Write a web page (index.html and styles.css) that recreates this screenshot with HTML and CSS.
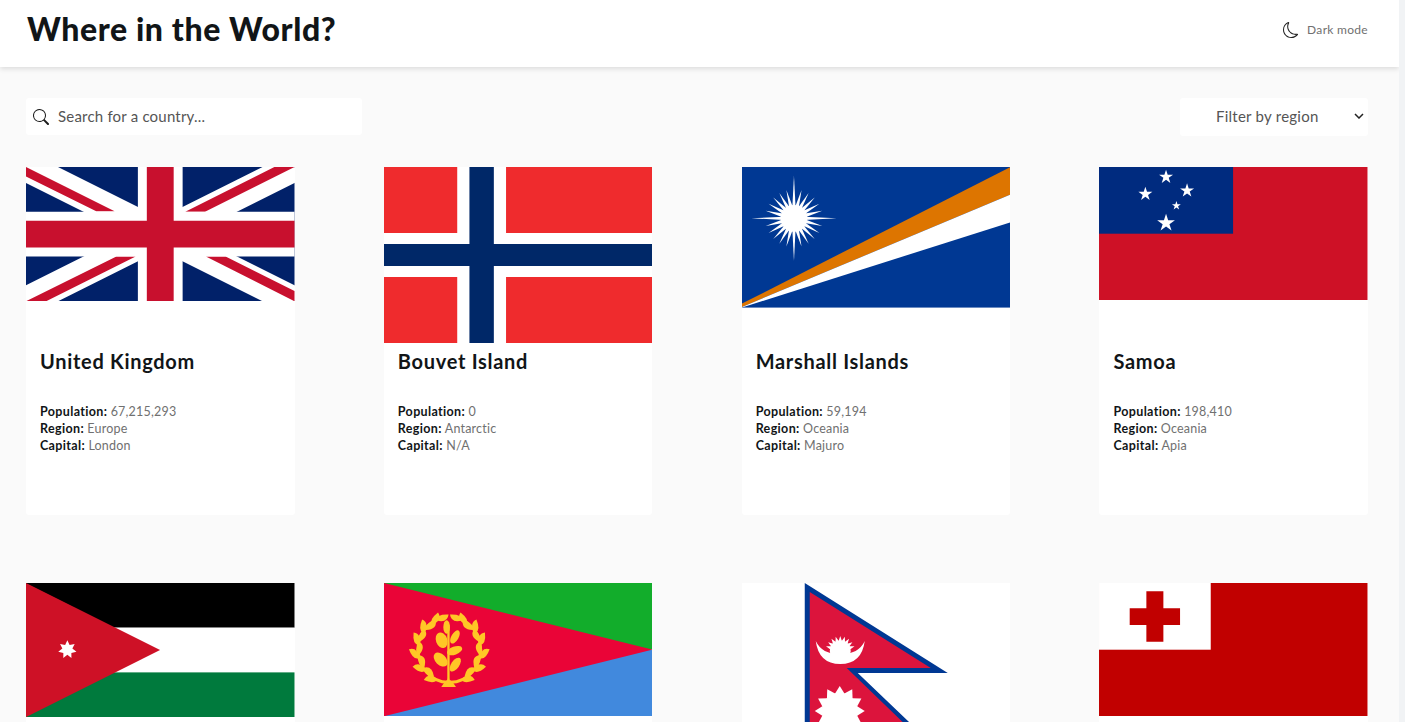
FILE: index.html
```html
<!DOCTYPE html>
<html lang="en">
<head>
<meta charset="utf-8">
<title>Where in the World?</title>
<link rel="stylesheet" href="styles.css">
</head>
<body>
<div class="app">
  <header class="topbar">
    <h1 class="brand">Where in the World?</h1>
    <button class="mode" type="button">
      <svg class="mode-icon" viewBox="0 0 16 16" fill="currentColor"><path d="M6 .278a.768.768 0 0 1 .08.858 7.208 7.208 0 0 0-.878 3.46c0 4.021 3.278 7.277 7.318 7.277.527 0 1.04-.055 1.533-.16a.787.787 0 0 1 .81.316.733.733 0 0 1-.031.893A8.349 8.349 0 0 1 8.344 16C3.734 16 0 12.286 0 7.71 0 4.266 2.114 1.312 5.124.06A.752.752 0 0 1 6 .278zM4.858 1.311A7.269 7.269 0 0 0 1.025 7.71c0 4.02 3.279 7.276 7.319 7.276a7.316 7.316 0 0 0 5.205-2.162c-.337.042-.68.063-1.029.063-4.61 0-8.343-3.714-8.343-8.29 0-1.167.242-2.278.681-3.286z"/></svg>
      <span>Dark mode</span>
    </button>
  </header>
  <main class="content">
    <div class="toolbar">
      <label class="search">
        <svg class="search-icon" viewBox="0 0 16 16" fill="currentColor"><path d="M11.742 10.344a6.5 6.5 0 1 0-1.397 1.398h-.001c.03.04.062.078.098.115l3.85 3.85a1 1 0 0 0 1.415-1.414l-3.85-3.85a1.007 1.007 0 0 0-.115-.1zM12 6.5a5.5 5.5 0 1 1-11 0 5.5 5.5 0 0 1 11 0z"/></svg>
        <input class="search-input" type="text" placeholder="Search for a country...">
      </label>
      <div class="filter">
        <span>Filter by region</span>
        <svg class="chevron" viewBox="0 0 10 6" fill="none" stroke="currentColor" stroke-width="1.5"><path d="M1 1l4 4 4-4"/></svg>
      </div>
    </div>

    <svg class="defs" aria-hidden="true">
      <defs>
        <polygon id="star5" points="0,-1 .225,-.309 .951,-.309 .363,.118 .588,.809 0,.382 -.588,.809 -.363,.118 -.951,-.309 -.225,-.309"/>
        <polygon id="ray-long" points="-5,-30 0,-128 5,-30"/>
        <polygon id="ray-short" points="-6,-30 0,-88 6,-30"/>
        <path id="leaf" d="M0 0Q6 -18 40 -7Q30 18 0 0Z"/>
      </defs>
    </svg>

    <section class="grid">
      <article class="card">
        <div class="flagbox">
          <svg class="flag" viewBox="0 0 60 30">
            <rect width="60" height="30" fill="#012169"/>
            <path d="M0 0L60 30M60 0L0 30" stroke="#fff" stroke-width="6.4"/>
            <path d="M0 0L19.8 9.9H15.7L0 2.1ZM55.5 0H60L40 10H35.6ZM20.2 20H24.5L4.5 30H0ZM40.2 20H44.6L60 27.7V30Z" fill="#C8102E"/>
            <path d="M30 0V30M0 15H60" stroke="#fff" stroke-width="10"/>
            <path d="M30 0V30M0 15H60" stroke="#C8102E" stroke-width="6"/>
          </svg>
        </div>
        <div class="card-body">
          <h2 class="country">United Kingdom</h2>
          <p class="fact"><b>Population:</b> 67,215,293</p>
          <p class="fact"><b>Region:</b> Europe</p>
          <p class="fact"><b>Capital:</b> London</p>
        </div>
      </article>

      <article class="card">
        <div class="flagbox">
          <svg class="flag flag-fill" viewBox="0 0 22 16" preserveAspectRatio="none">
            <rect width="22" height="16" fill="#EF2B2D"/>
            <path d="M8 0V16M0 8H22" stroke="#fff" stroke-width="4"/>
            <path d="M8 0V16M0 8H22" stroke="#002868" stroke-width="2"/>
          </svg>
        </div>
        <div class="card-body">
          <h2 class="country">Bouvet Island</h2>
          <p class="fact"><b>Population:</b> 0</p>
          <p class="fact"><b>Region:</b> Antarctic</p>
          <p class="fact"><b>Capital:</b> N/A</p>
        </div>
      </article>

      <article class="card">
        <div class="flagbox">
          <svg class="flag" viewBox="0 0 806 422">
            <rect width="806" height="422" fill="#003893"/>
            <polygon points="0,410 806,0 806,83 0,420" fill="#DD7500"/>
            <polygon points="0,420 806,83 806,166 0,422" fill="#fff"/>
            <g fill="#fff" transform="translate(156 154)">
              <circle r="40"/>
              <use href="#ray-long"/>
              <use href="#ray-short" transform="rotate(15)"/>
              <use href="#ray-short" transform="rotate(30)"/>
              <use href="#ray-short" transform="rotate(45)"/>
              <use href="#ray-short" transform="rotate(60)"/>
              <use href="#ray-short" transform="rotate(75)"/>
              <use href="#ray-long" transform="rotate(90)"/>
              <use href="#ray-short" transform="rotate(105)"/>
              <use href="#ray-short" transform="rotate(120)"/>
              <use href="#ray-short" transform="rotate(135)"/>
              <use href="#ray-short" transform="rotate(150)"/>
              <use href="#ray-short" transform="rotate(165)"/>
              <use href="#ray-long" transform="rotate(180)"/>
              <use href="#ray-short" transform="rotate(195)"/>
              <use href="#ray-short" transform="rotate(210)"/>
              <use href="#ray-short" transform="rotate(225)"/>
              <use href="#ray-short" transform="rotate(240)"/>
              <use href="#ray-short" transform="rotate(255)"/>
              <use href="#ray-long" transform="rotate(270)"/>
              <use href="#ray-short" transform="rotate(285)"/>
              <use href="#ray-short" transform="rotate(300)"/>
              <use href="#ray-short" transform="rotate(315)"/>
              <use href="#ray-short" transform="rotate(330)"/>
              <use href="#ray-short" transform="rotate(345)"/>
            </g>
          </svg>
        </div>
        <div class="card-body">
          <h2 class="country">Marshall Islands</h2>
          <p class="fact"><b>Population:</b> 59,194</p>
          <p class="fact"><b>Region:</b> Oceania</p>
          <p class="fact"><b>Capital:</b> Majuro</p>
        </div>
      </article>

      <article class="card">
        <div class="flagbox">
          <svg class="flag" viewBox="0 0 805 400">
            <rect width="805" height="400" fill="#CE1126"/>
            <rect width="402" height="200" fill="#002B7F"/>
            <g fill="#fff">
              <use href="#star5" transform="translate(201 30) scale(22)"/>
              <use href="#star5" transform="translate(139 81) scale(22)"/>
              <use href="#star5" transform="translate(264 71) scale(22)"/>
              <use href="#star5" transform="translate(232 116) scale(14)"/>
              <use href="#star5" transform="translate(201 168) scale(28)"/>
            </g>
          </svg>
        </div>
        <div class="card-body">
          <h2 class="country">Samoa</h2>
          <p class="fact"><b>Population:</b> 198,410</p>
          <p class="fact"><b>Region:</b> Oceania</p>
          <p class="fact"><b>Capital:</b> Apia</p>
        </div>
      </article>

      <article class="card">
        <div class="flagbox">
          <svg class="flag" viewBox="0 0 805 402">
            <rect width="805" height="134" fill="#000"/>
            <rect y="134" width="805" height="134" fill="#fff"/>
            <rect y="268" width="805" height="134" fill="#007A3D"/>
            <polygon points="0,0 402,201 0,402" fill="#CE1126"/>
            <polygon fill="#fff" transform="translate(124 200) scale(28)" points="0,-1 .239,-.496 .782,-.623 .536,-.123 .975,.223 .43,.343 .434,.901 0,.55 -.434,.901 -.43,.343 -.975,.223 -.536,-.123 -.782,-.623 -.239,-.496"/>
          </svg>
        </div>
      </article>

      <article class="card">
        <div class="flagbox">
          <svg class="flag" viewBox="0 0 806 400">
            <rect width="806" height="200" fill="#12AD2B"/>
            <rect y="200" width="806" height="200" fill="#4189DD"/>
            <polygon points="0,0 806,200 0,400" fill="#EA0437"/>
            <g fill="#FFC726">
              <g id="wreath-left">
                <path d="M193 298C140 298 102 250 102 200C102 160 125 125 160 108" fill="none" stroke="#FFC726" stroke-width="9"/>
                <use href="#leaf" transform="translate(160 288) rotate(185)"/>
                <use href="#leaf" transform="translate(150 280) rotate(228)"/>
                <use href="#leaf" transform="translate(125 262) rotate(205)"/>
                <use href="#leaf" transform="translate(121 253) rotate(255)"/>
                <use href="#leaf" transform="translate(105 226) rotate(232)"/>
                <use href="#leaf" transform="translate(105 216) rotate(280)"/>
                <use href="#leaf" transform="translate(104 186) rotate(258)"/>
                <use href="#leaf" transform="translate(107 176) rotate(300)"/>
                <use href="#leaf" transform="translate(118 150) rotate(275)"/>
                <use href="#leaf" transform="translate(126 141) rotate(325)"/>
                <use href="#leaf" transform="translate(145 125) rotate(305)"/>
                <use href="#leaf" transform="translate(157 112) rotate(345)"/>
              </g>
              <use href="#wreath-left" transform="matrix(-1 0 0 1 392 0)"/>
              <path d="M190 125H197L197 285L199 305H188L190 285Z"/>
              <ellipse cx="188" cy="132" rx="10" ry="20"/>
              <ellipse cx="173" cy="172" rx="17" ry="24" transform="rotate(-20 173 172)"/>
              <ellipse cx="213" cy="162" rx="11" ry="22" transform="rotate(30 213 162)"/>
              <ellipse cx="212" cy="203" rx="12" ry="24" transform="rotate(70 212 203)"/>
              <ellipse cx="170" cy="230" rx="16" ry="25" transform="rotate(-45 170 230)"/>
              <ellipse cx="214" cy="245" rx="12" ry="24" transform="rotate(35 214 245)"/>
              <polygon points="172,312 216,312 208,300 200,292 188,292 180,300"/>
            </g>
          </svg>
        </div>
      </article>

      <article class="card">
        <div class="flagbox">
          <svg class="flag flag-fill" viewBox="0 0 143 176">
            <polygon points="0,0 143,90 53,90 143,176 0,176" fill="#003893"/>
            <polygon points="5,9 126,85 42,85 131,171 5,171" fill="#DC143C"/>
            <g fill="#fff">
              <path d="M11 58Q14 81 35.5 81Q57 81 60 58Q54 71 35.5 71.5Q17 71 11 58Z"/>
              <circle cx="35.5" cy="68" r="10.5"/>
              <polygon points="33.5,59 35.5,53 37.5,59"/>
              <polygon points="33.5,59 35.5,53 37.5,59" transform="rotate(18 35.5 68)"/>
              <polygon points="33.5,59 35.5,53 37.5,59" transform="rotate(36 35.5 68)"/>
              <polygon points="33.5,59 35.5,53 37.5,59" transform="rotate(54 35.5 68)"/>
              <polygon points="33.5,59 35.5,53 37.5,59" transform="rotate(72 35.5 68)"/>
              <polygon points="33.5,59 35.5,53 37.5,59" transform="rotate(-18 35.5 68)"/>
              <polygon points="33.5,59 35.5,53 37.5,59" transform="rotate(-36 35.5 68)"/>
              <polygon points="33.5,59 35.5,53 37.5,59" transform="rotate(-54 35.5 68)"/>
              <polygon points="33.5,59 35.5,53 37.5,59" transform="rotate(-72 35.5 68)"/>
              <circle cx="35" cy="128" r="18"/>
              <polygon points="30,111 35,103 40,111"/>
              <polygon points="30,111 35,103 40,111" transform="rotate(30 35 128)"/>
              <polygon points="30,111 35,103 40,111" transform="rotate(60 35 128)"/>
              <polygon points="30,111 35,103 40,111" transform="rotate(90 35 128)"/>
              <polygon points="30,111 35,103 40,111" transform="rotate(120 35 128)"/>
              <polygon points="30,111 35,103 40,111" transform="rotate(150 35 128)"/>
              <polygon points="30,111 35,103 40,111" transform="rotate(180 35 128)"/>
              <polygon points="30,111 35,103 40,111" transform="rotate(210 35 128)"/>
              <polygon points="30,111 35,103 40,111" transform="rotate(240 35 128)"/>
              <polygon points="30,111 35,103 40,111" transform="rotate(270 35 128)"/>
              <polygon points="30,111 35,103 40,111" transform="rotate(300 35 128)"/>
              <polygon points="30,111 35,103 40,111" transform="rotate(330 35 128)"/>
            </g>
          </svg>
        </div>
      </article>

      <article class="card">
        <div class="flagbox">
          <svg class="flag" viewBox="0 0 805 400">
            <rect width="805" height="400" fill="#C10000"/>
            <rect width="335" height="200" fill="#fff"/>
            <path d="M142 25H193V76H243V126H193V176H142V126H92V76H142Z" fill="#C10000"/>
          </svg>
        </div>
      </article>
    </section>
  </main>
</div>
</body>
</html>
```
FILE: styles.css
```css
* { box-sizing: border-box; }

html, body {
  margin: 0;
  height: 100%;
  overflow: hidden;
  background: #f1f3f5;
}

body {
  font-family: "Lato", "Noto Sans", sans-serif;
  color: #111517;
}

.app {
  width: 1399px;
  height: 100%;
  background: #fafafa;
  overflow: hidden;
}

.topbar {
  height: 67px;
  padding: 0 31px 0 27px;
  display: flex;
  align-items: center;
  justify-content: space-between;
  background: #fff;
  box-shadow: 0 2px 5px rgba(0, 0, 0, 0.12);
  position: relative;
}

.brand {
  margin: 0 0 10px;
  font-size: 32px;
  font-weight: 900;
  line-height: 44px;
  letter-spacing: 0.6px;
}

.mode {
  display: flex;
  align-items: center;
  gap: 8px;
  margin-bottom: 8px;
  padding: 0;
  border: 0;
  background: none;
  font: inherit;
  font-size: 12px;
  font-weight: 400;
  letter-spacing: 0.3px;
  color: #707070;
}

.mode-icon {
  width: 16px;
  height: 16px;
  color: #222;
}

.content {
  padding: 31px 31px 0 26px;
}

.toolbar {
  display: flex;
  justify-content: space-between;
  margin-bottom: 31px;
}

.search {
  width: 336px;
  height: 37px;
  padding-left: 7px;
  display: flex;
  align-items: center;
  gap: 9px;
  background: #fff;
  border-radius: 3px;
}

.search-icon {
  width: 16px;
  height: 16px;
  flex: none;
  color: #1c1c1c;
}

.search-input {
  flex: 1;
  min-width: 0;
  height: 35px;
  margin-bottom: 2px;
  border: 0;
  outline: 0;
  background: none;
  padding: 0;
  font: inherit;
  font-size: 15px;
  font-weight: 400;
  letter-spacing: 0.2px;
  color: #555;
}

.search-input::placeholder {
  color: #555;
  opacity: 1;
}

.filter {
  width: 188px;
  height: 38px;
  padding: 0 4px 2px 36px;
  display: flex;
  align-items: center;
  justify-content: space-between;
  background: #fff;
  border-radius: 3px;
  font-size: 15px;
  font-weight: 400;
  letter-spacing: 0.25px;
  color: #555;
}

.chevron {
  width: 10px;
  height: 6px;
  color: #222;
}

.defs {
  display: none;
}

.grid {
  display: grid;
  grid-template-columns: repeat(4, 268.5px);
  justify-content: space-between;
  row-gap: 68px;
}

.card {
  height: 348px;
  background: #fff;
  border-radius: 0 0 3px 3px;
}

.flagbox {
  height: 176px;
}

.flag {
  display: block;
  width: 100%;
  height: auto;
}

.flag-fill {
  height: 100%;
}

.card-body {
  padding: 5px 14px 0;
}

.country {
  margin: 0 0 28px;
  font-size: 20px;
  font-weight: 700;
  line-height: 27px;
  letter-spacing: 0.7px;
}

.fact {
  margin: 0;
  font-size: 12.5px;
  font-weight: 400;
  line-height: 17px;
  letter-spacing: 0.2px;
  color: #707070;
}

.fact b {
  color: #111517;
  font-weight: 700;
  letter-spacing: 0.35px;
}
```
